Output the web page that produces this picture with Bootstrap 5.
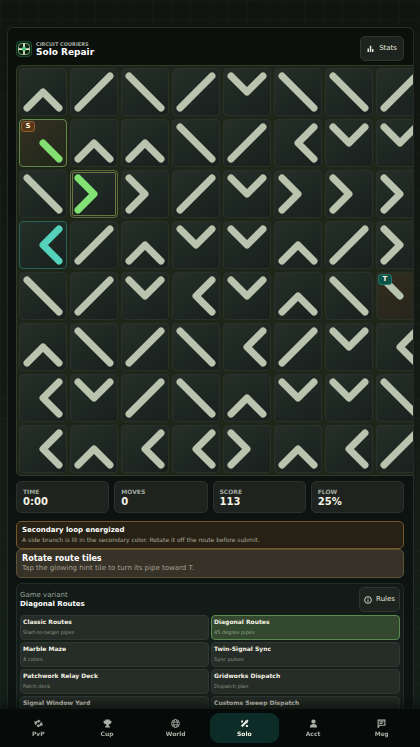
<!DOCTYPE html>
<html lang="en" data-bs-theme="dark">
<head>
<meta charset="utf-8">
<meta name="viewport" content="width=device-width, initial-scale=1">
<title>Circuit Couriers – Solo Repair</title>
<link href="https://cdn.jsdelivr.net/npm/bootstrap@5.3.0/dist/css/bootstrap.min.css" rel="stylesheet">
<style>
:root { --cc-text: #f5f3e4; --cc-muted: #9ba298; }
body {
  font-family: "DejaVu Sans", Verdana, sans-serif;
  color: var(--cc-text);
  font-size: 7px; line-height: 9px;
  background-color: #101713;
  background-image:
    linear-gradient(90deg, rgba(130,170,130,.03) 1px, transparent 1px),
    linear-gradient(rgba(130,170,130,.03) 1px, transparent 1px),
    linear-gradient(#11150f, #15201b);
  background-size: 19px 19px, 19px 19px, 100% 100%;
}
h1, h2, p, dl, dd, dt { margin: 0; line-height: inherit; }
.shell { margin: 27px 6px 60px 7px; padding: 8px 9px 8px 8px; border: 1px solid #252c27; border-radius: 6px; background: linear-gradient(#0b100d, #0e1411); }
.brand-kicker { font-size: 5px; line-height: 6px; font-weight: 700; color: #a3a99f; }
.brand-title { font-size: 9px; line-height: 10px; font-weight: 700; }
.tool-btn { --bs-btn-color: #e4e4d8; --bs-btn-bg: #1d231f; --bs-btn-border-color: #2f3631; --bs-btn-hover-bg: #262d28;
  --bs-btn-padding-x: 6px; --bs-btn-padding-y: 7px; --bs-btn-border-radius: 5px; --bs-btn-font-size: 7px; --bs-btn-line-height: 9px; min-height: 25px; gap: 5px; }
.tool-btn-sm { --bs-btn-padding-x: 4px; gap: 4px; }
.block-gap { margin-top: 5px; }

.board { width: max-content; grid-template-columns: repeat(8, 48px); gap: 3px; padding: 2px;
  border: 1px solid #2f3a29; border-radius: 5px; background: #1e2519; }
.tile { width: 48px; height: 48px; padding: 0; border: 1px solid #29322a; border-radius: 4px; color: #b9c4ae;
  background: linear-gradient(145deg, #263029, #17201d); }
.tile svg { width: 48px; height: 48px; margin: -1px; display: block; fill: none; stroke: currentColor; stroke-width: 7; stroke-linecap: round; stroke-linejoin: round; }
.tile-source { border-color: #61874c; background: linear-gradient(145deg, #333022, #20271a); color: #83df70; }
.tile-hint { border-color: #5b6a3b; box-shadow: inset 0 0 0 1px #20281b, inset 0 0 0 2px #6b7444; color: #83e274; }
.tile-second { border-color: #286258; color: #54d2bc; }
.tile-target { background: linear-gradient(145deg, #302d20, #27251a); }
.pin { top: 1px; left: 1px; width: 14px; height: 11px; border: 1px solid #94602d; border-radius: 3px; background: #563719; color: #fff3df; font-size: 7px; line-height: 9px; font-weight: 700; }
.pin-target { border-color: #1c7766; background: #0d5146; }

.stat-row { --bs-gutter-x: 5px; }
.stat { padding: 5px 6px; border: 1px solid #2b322d; border-radius: 5px; background: #1e231f; }
.stat dt { font-size: 6px; line-height: 9px; color: #a2a99f; }
.stat dd { font-size: 10px; line-height: 11px; font-weight: 700; }

.notice { padding: 4px 5px; border: 1px solid #73572b; border-radius: 5px; background: #272115; }
.notice p { font-size: 6px; color: #a8a594; }
.notice-tip { background: #373228; border-color: #5f5135; }
.notice-tip h2 { font-size: 8px; line-height: 10px; }
.notice-tip p { font-size: 7px; color: #a3a092; }
h2 { font-size: 7px; font-weight: 700; }

.variants { padding: 3px; border: 1px solid #202d29; border-radius: 5px; background: linear-gradient(#131b18, #17201b); }
.variants-head { margin-bottom: 3px; }
.variant-label { color: var(--cc-muted); }
.option-grid { grid-template-columns: repeat(2, 1fr); gap: 2px; }
.option { height: 25px; padding: 1px 2px; border: 1px solid #2f3832; border-radius: 4px; background: #262c27; color: var(--cc-text); }
.option strong { font-size: 6px; line-height: 10px; }
.option span { font-size: 5px; line-height: 10px; color: #8d968b; }
.option.is-on { border-color: #598a51; background: #33482f; }
.option.is-on span { color: #93a58c; }

.dock { padding: 4px; background: #060a08; box-shadow: 0 -2px 10px 4px rgba(9,14,11,.7); }
.dock a { min-height: 30px; border-radius: 9px; padding: 1px 0 0; color: #a9b0a7; font-size: 6px; line-height: 8px; font-weight: 700; }
.dock a.active { background: #0d2c27; color: #f0f1e6; }
.dock svg { width: 9px; height: 9px; margin-bottom: 2px; }
</style>
<script src="https://cdn.jsdelivr.net/npm/bootstrap@5.3.0/dist/js/bootstrap.bundle.min.js"></script>
</head>
<body>
<main class="shell overflow-hidden">
  <header class="d-flex align-items-center mb-1">
    <svg width="16" height="16" viewBox="0 0 32 32" class="me-1" aria-hidden="true">
      <rect x="1" y="1" width="30" height="30" rx="7" fill="#0d2116" stroke="#1f4f31" stroke-width="2"/>
      <rect x="5" y="5" width="22" height="22" rx="6" fill="none" stroke="#7fae79" stroke-width="2"/>
      <path d="M16 5v22M5 16h22" stroke="#f0edcf" stroke-width="3.5"/>
      <circle cx="16" cy="16" r="4.5" fill="#4cc77a"/>
    </svg>
    <div class="flex-grow-1">
      <p class="brand-kicker">CIRCUIT COURIERS</p>
      <h1 class="brand-title">Solo Repair</h1>
    </div>
    <button type="button" class="btn tool-btn d-flex align-items-center">
      <svg width="7" height="9" viewBox="0 0 7 9" fill="currentColor" aria-hidden="true"><path d="M.5 4.500H2V8H.5zM2.800 1.800h1.500V8H2.800zM5 5h1.500v3H5z"/></svg>
      <span>Stats</span>
    </button>
  </header>

  <div class="board d-grid" id="board" role="group" aria-label="Route tiles"></div>

  <dl class="row row-cols-4 stat-row block-gap">
    <div class="col"><div class="stat"><dt>TIME</dt><dd>0:00</dd></div></div>
    <div class="col"><div class="stat"><dt>MOVES</dt><dd>0</dd></div></div>
    <div class="col"><div class="stat"><dt>SCORE</dt><dd>113</dd></div></div>
    <div class="col"><div class="stat"><dt>FLOW</dt><dd>25%</dd></div></div>
  </dl>

  <section class="notice mt-2">
    <h2>Secondary loop energized</h2>
    <p>A side branch is lit in the secondary color. Rotate it off the route before submit.</p>
  </section>
  <section class="notice notice-tip">
    <h2>Rotate route tiles</h2>
    <p>Tap the glowing hint tile to turn its pipe toward T.</p>
  </section>

  <section class="variants block-gap">
    <div class="variants-head d-flex align-items-center justify-content-between">
      <div>
        <p class="variant-label">Game variant</p>
        <h2>Diagonal Routes</h2>
      </div>
      <button type="button" class="btn tool-btn tool-btn-sm d-flex align-items-center">
        <svg width="8" height="8" viewBox="0 0 9 9" fill="none" stroke="currentColor" aria-hidden="true"><circle cx="4.5" cy="4.5" r="3.800"/><path d="M4.5 4v2.800M4.5 2.200v1"/></svg>
        <span>Rules</span>
      </button>
    </div>
    <div class="option-grid d-grid" id="options"></div>
  </section>
</main>

<nav class="dock fixed-bottom d-flex" aria-label="Main">
  <a href="#pvp" class="flex-fill w-100 d-flex flex-column align-items-center justify-content-center text-decoration-none">
    <svg viewBox="0 0 16 16" fill="none" stroke="currentColor" stroke-width="3" aria-hidden="true"><path d="M3 10A5 5 0 0 1 8 4M13 6A5 5 0 0 1 8 12"/><path d="M1 3l4.500 4L1 8.500zM15 13l-4.500-4L15 7.500zM7 1l5 2.500L8 7zM9 15l-5-2.500L8 9z" fill="currentColor" stroke="none"/></svg>PvP</a>
  <a href="#cup" class="flex-fill w-100 d-flex flex-column align-items-center justify-content-center text-decoration-none">
    <svg viewBox="0 0 16 16" fill="currentColor" aria-hidden="true"><path d="M4 1h8v2h3v2.500c0 2-1.500 3.500-3.400 3.600A4.500 4.500 0 0 1 10 10.800V12.500H12V15H4v-2.500h2v-1.700A4.500 4.500 0 0 1 4.400 9.100C2.500 9 1 7.500 1 5.500V3h3z"/></svg>Cup</a>
  <a href="#world" class="flex-fill w-100 d-flex flex-column align-items-center justify-content-center text-decoration-none">
    <svg viewBox="0 0 16 16" fill="none" stroke="currentColor" stroke-width="1.500" aria-hidden="true"><circle cx="8" cy="8" r="7"/><ellipse cx="8" cy="8" rx="3.200" ry="7"/><path d="M1.500 5.500h13M1.500 10.500h13"/></svg>World</a>
  <a href="#solo" aria-current="page" class="active flex-fill w-100 d-flex flex-column align-items-center justify-content-center text-decoration-none">
    <svg viewBox="0 0 16 16" fill="currentColor" aria-hidden="true"><path d="M9 2.500h2.500l2-1.500 1.500 1.500-1.500 2.500V7.500H11L4.500 14.500l-3-3L9 5z"/><path d="M2 2.500h3.500V6H2zM10.500 10.500H14V14h-3.500z"/></svg>Solo</a>
  <a href="#acct" class="flex-fill w-100 d-flex flex-column align-items-center justify-content-center text-decoration-none">
    <svg viewBox="0 0 16 16" fill="currentColor" aria-hidden="true"><circle cx="8" cy="4.500" r="3.800"/><path d="M1.500 15c0-4 2.500-6 6.500-6s6.500 2 6.500 6z"/></svg>Acct</a>
  <a href="#msg" class="flex-fill w-100 d-flex flex-column align-items-center justify-content-center text-decoration-none">
    <svg viewBox="0 0 16 16" fill="none" stroke="currentColor" stroke-width="2" aria-hidden="true"><path d="M2 15V2h12v9H5zM4.500 5h7M4.500 8h5"/></svg>Msg</a>
</nav>

<script>
// Pipe shapes: each one joins two corners of its tile; "." and "," are the half-length end pieces.
const shapes = {
  '^': 'M8 40L24 24L40 40', 'v': 'M8 8L24 24L40 8', '<': 'M40 8L24 24L40 40', '>': 'M8 8L24 24L8 40',
  '/': 'M8 40L40 8', '\\': 'M8 8L40 40', '.': 'M24 24L40 40', ',': 'M8 8L24 24'
};
const rows = ['^/\\/v\\\\/', '.^^\\/<vv', '\\>>/v>>>', '</^vv^/>', '\\/v<v^\\,', '^\\/\\</v<', '<v/\\^vv\\', '<^<<>^</'];
const special = { 8: 'tile-source', 17: 'tile-hint', 24: 'tile-second', 39: 'tile-target' };
const pins = { 8: '<span class="pin position-absolute d-block">S</span>', 39: '<span class="pin pin-target position-absolute d-block">T</span>' };
document.getElementById('board').innerHTML = [...rows.join('')].map((s, i) =>
  `<button type="button" class="tile position-relative ${special[i] || ''}" aria-label="Row ${(i >> 3) + 1}, column ${i % 8 + 1}"><svg viewBox="0 0 48 48"><path d="${shapes[s]}"/></svg>${pins[i] || ''}</button>`).join('');

const options = [
  ['Classic Routes', 'Start-to-target pipes'], ['Diagonal Routes', '45 degree pipes'],
  ['Marble Maze', '4 colors'], ['Twin-Signal Sync', 'Sync pulses'],
  ['Patchwork Relay Deck', 'Patch deck'], ['Gridworks Dispatch', 'Dispatch plan'],
  ['Signal Window Yard', 'Window plan'], ['Customs Sweep Dispatch', 'Sweep plan']
];
document.getElementById('options').innerHTML = options.map(([name, note]) =>
  `<button type="button" class="option d-flex flex-column align-items-start ${name === 'Diagonal Routes' ? 'is-on' : ''}"><strong>${name}</strong><span>${note}</span></button>`).join('');
</script>
</body>
</html>
